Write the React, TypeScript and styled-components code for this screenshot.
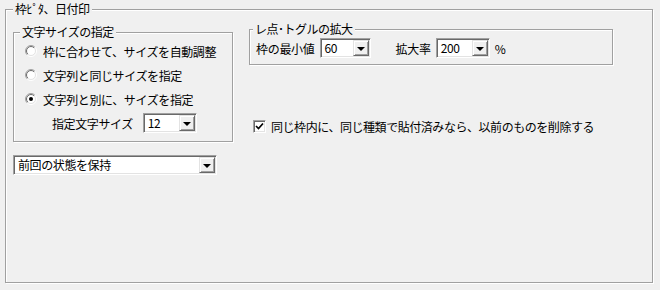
import styled, { createGlobalStyle } from "styled-components";

const GlobalStyle = createGlobalStyle`
  html, body {
    margin: 0;
    background: #f0f0f0;
  }
  body {
    font-family: "Noto Sans CJK JP", "Noto Sans", sans-serif;
    font-size: 12px;
    color: #000;
  }
`;

const Page = styled.div`
  width: 660px;
  height: 290px;
  padding: 2px 0 0 5px;
  box-sizing: border-box;
`;

// etched group box like the old win32 frames
const Group = styled.fieldset<{ $w: number; $h: number }>`
  margin: 0;
  padding: 0;
  min-width: 0;
  width: ${(p) => p.$w}px;
  height: ${(p) => p.$h}px;
  box-sizing: border-box;
  border: 1px solid #a0a0a0;
  box-shadow: inset 1px 1px #fff, 1px 1px #fff;
`;

const Legend = styled.legend<{ $offset: number }>`
  margin-left: ${(p) => p.$offset}px;
  padding: 0 2px;
  line-height: 14px;
  background: #f0f0f0;
  letter-spacing: -0.5px;
`;

const Body = styled.div`
  display: flex;
  align-items: flex-start;
  padding-left: 7px;
`;

const LeftColumn = styled.div`
  display: flex;
  flex-direction: column;
  margin-top: 9px;
`;

const RightColumn = styled.div`
  display: flex;
  flex-direction: column;
  margin-top: 6px;
  margin-left: 16px;
`;

const RadioList = styled.div`
  display: flex;
  flex-direction: column;
  padding-left: 11px;
`;

const OptionRow = styled.label`
  display: flex;
  align-items: center;
  gap: 6px;
  height: 24px;
  letter-spacing: -0.4px;
  white-space: nowrap;
`;

const SizeRow = styled.div`
  display: flex;
  align-items: center;
  height: 24px;
  padding-left: 38px;
  gap: 10px;
  letter-spacing: -0.4px;
`;

const Text = styled.span<{ $gap?: number }>`
  margin-left: ${(p) => p.$gap ?? 0}px;
  letter-spacing: -0.3px;
  white-space: nowrap;
`;

const ZoomRow = styled.div`
  display: flex;
  align-items: center;
  gap: 5px;
  padding: 2px 0 0 6px;
  height: 20px;
`;

const CheckRow = styled.label`
  display: flex;
  align-items: center;
  gap: 5px;
  margin: 53px 0 0 4px;
  height: 16px;
  letter-spacing: -0.45px;
  white-space: nowrap;
`;

const ComboBox = styled.div<{ $w: number }>`
  display: flex;
  align-items: stretch;
  width: ${(p) => p.$w}px;
  height: 20px;
  box-sizing: border-box;
  background: #fff;
  border: 1px solid;
  border-color: #a0a0a0 #fff #fff #a0a0a0;
  box-shadow: inset 1px 1px #696969, inset -1px -1px #e3e3e3;
  padding: 1px;
`;

const ComboValue = styled.span`
  flex: 1;
  padding-left: 3px;
  line-height: 16px;
  letter-spacing: -0.4px;
  white-space: nowrap;
  overflow: hidden;
`;

const ComboButton = styled.span`
  width: 16px;
  box-sizing: border-box;
  background: #f0f0f0;
  border: 1px solid;
  border-color: #e3e3e3 #696969 #696969 #e3e3e3;
  box-shadow: inset 1px 1px #fff, inset -1px -1px #a0a0a0;
  display: flex;
  align-items: center;
  justify-content: center;
`;

const Arrow = styled.span`
  width: 0;
  height: 0;
  border-left: 4px solid transparent;
  border-right: 4px solid transparent;
  border-top: 4px solid #000;
  margin-top: 1px;
`;

const CheckBox = styled.span`
  width: 13px;
  height: 13px;
  box-sizing: border-box;
  background: #fff;
  border: 1px solid;
  border-color: #a0a0a0 #fff #fff #a0a0a0;
  box-shadow: inset 1px 1px #696969, inset -1px -1px #e3e3e3;
  display: flex;
  align-items: center;
  justify-content: center;
`;

const Combo = ({ value, width }: { value: string; width: number }) => (
  <ComboBox $w={width}>
    <ComboValue>{value}</ComboValue>
    <ComboButton>
      <Arrow />
    </ComboButton>
  </ComboBox>
);

const Radio = ({ checked }: { checked?: boolean }) => (
  <svg width="12" height="12" viewBox="0 0 12 12">
    <defs>
      <linearGradient id="rOuter" x1="0" y1="0" x2="1" y2="1">
        <stop offset="0.45" stopColor="#a0a0a0" />
        <stop offset="0.55" stopColor="#ffffff" />
      </linearGradient>
      <linearGradient id="rInner" x1="0" y1="0" x2="1" y2="1">
        <stop offset="0.45" stopColor="#696969" />
        <stop offset="0.55" stopColor="#e3e3e3" />
      </linearGradient>
    </defs>
    <circle cx="6" cy="6" r="5.5" fill="none" stroke="url(#rOuter)" />
    <circle cx="6" cy="6" r="4.5" fill="#fff" stroke="url(#rInner)" />
    {checked && <circle cx="6" cy="6" r="2" fill="#000" />}
  </svg>
);

const Option = ({ label, checked }: { label: string; checked?: boolean }) => (
  <OptionRow>
    <Radio checked={checked} />
    {label}
  </OptionRow>
);

const App = () => {
  return (
    <Page>
      <GlobalStyle />
      <Group $w={648} $h={281}>
        <Legend $offset={7}>枠ﾋﾟﾀ、日付印</Legend>
        <Body>
          <LeftColumn>
            <Group $w={220} $h={117}>
              <Legend $offset={6}>文字サイズの指定</Legend>
              <RadioList>
                <Option label="枠に合わせて、サイズを自動調整" />
                <Option label="文字列と同じサイズを指定" />
                <Option label="文字列と別に、サイズを指定" checked />
              </RadioList>
              <SizeRow>
                <span>指定文字サイズ</span>
                <Combo value="12" width={54} />
              </SizeRow>
            </Group>
            <div style={{ marginTop: 13 }}>
              <Combo value="前回の状態を保持" width={204} />
            </div>
          </LeftColumn>
          <RightColumn>
            <Group $w={364} $h={43}>
              <Legend $offset={3}>レ点･トグルの拡大</Legend>
              <ZoomRow>
                <Text>枠の最小値</Text>
                <Combo value="60" width={51} />
                <Text $gap={20}>拡大率</Text>
                <Combo value="200" width={54} />
                <Text>%</Text>
              </ZoomRow>
            </Group>
            <CheckRow>
              <CheckBox>
                <svg width="9" height="9" viewBox="0 0 9 9">
                  <path d="M1 4 L3.5 6.5 L8 1.5" fill="none" stroke="#000" strokeWidth="1.7" />
                </svg>
              </CheckBox>
              同じ枠内に、同じ種類で貼付済みなら、以前のものを削除する
            </CheckRow>
          </RightColumn>
        </Body>
      </Group>
    </Page>
  );
};

export default App;
